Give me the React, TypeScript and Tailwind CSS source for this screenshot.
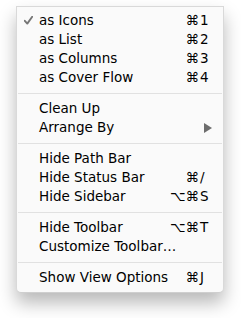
import React from "react";

type Item =
  | { sep: true }
  | { label: string; mods?: string; keyChar?: string; checked?: boolean; submenu?: boolean };

const items: Item[] = [
  { label: "as Icons", mods: "⌘", keyChar: "1", checked: true },
  { label: "as List", mods: "⌘", keyChar: "2" },
  { label: "as Columns", mods: "⌘", keyChar: "3" },
  { label: "as Cover Flow", mods: "⌘", keyChar: "4" },
  { sep: true },
  { label: "Clean Up" },
  { label: "Arrange By", submenu: true },
  { sep: true },
  { label: "Hide Path Bar" },
  { label: "Hide Status Bar", mods: "⌘", keyChar: "/" },
  { label: "Hide Sidebar", mods: "⌥⌘", keyChar: "S" },
  { sep: true },
  { label: "Hide Toolbar", mods: "⌥⌘", keyChar: "T" },
  { label: "Customize Toolbar…" },
  { sep: true },
  { label: "Show View Options", mods: "⌘", keyChar: "J" },
];

const Check = () => (
  <svg width="9" height="9" viewBox="0 0 9 9" className="ml-[7px]">
    <path d="M0.8 4.8 L3.3 7.6 L8.2 0.8" fill="none" stroke="#767676" strokeWidth="1.9" strokeLinejoin="round" strokeLinecap="round" />
  </svg>
);

const Arrow = () => (
  <svg width="8" height="10" viewBox="0 0 8 10" className="mr-[2px]">
    <path d="M0 0 L8 5 L0 10 Z" fill="#6d6d6d" />
  </svg>
);

export default function App() {
  return (
    <div className="w-[241px] h-[318px] bg-white pt-[6px] pl-[16px]" style={{ fontFamily: '"DejaVu Sans", sans-serif' }}>
      <div className="w-[208px] bg-[#fafafa] border-x border-t border-[#d9d9d9] border-b border-b-[#cfcfcf] rounded-b-[5px] pt-[4px] pb-[5px] shadow-[0_10px_18px_rgba(0,0,0,0.28)]">
        {items.map((it, i) =>
          "sep" in it ? (
            <div key={i} className="h-[12px] flex items-center px-[1px]">
              <div className="h-px w-full bg-[#e1e1e1]" />
            </div>
          ) : (
            <div key={i} className="h-[19px] flex items-center pr-[9px] text-[13.5px] text-black leading-none">
              <div className="w-[22px] flex items-center">{it.checked && <Check />}</div>
              <div className="flex-1 whitespace-nowrap">{it.label}</div>
              {it.submenu && <Arrow />}
              {it.keyChar && (
                <div className="flex">
                  <span className="text-right mr-[1px] whitespace-nowrap">{it.mods}</span>
                  <span className="w-[14px]">{it.keyChar}</span>
                </div>
              )}
            </div>
          )
        )}
      </div>
    </div>
  );
}
